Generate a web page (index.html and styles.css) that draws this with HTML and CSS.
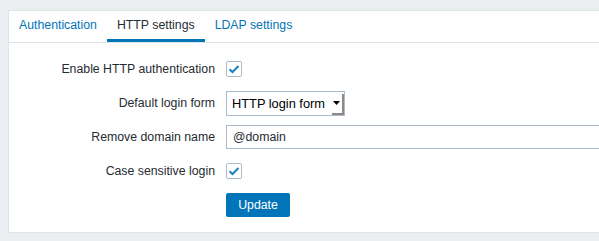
FILE: index.html
```html
<!DOCTYPE html>
<html>
<head>
<meta charset="utf-8">
<link rel="stylesheet" href="styles.css">
</head>
<body>
<div class="panel">
  <div class="tabs">
    <a class="tab">Authentication</a>
    <a class="tab active">HTTP settings</a>
    <a class="tab">LDAP settings</a>
  </div>
  <div class="form">
    <div class="row">
      <div class="label">Enable HTTP authentication</div>
      <div class="field"><span class="check"><svg width="12" height="10" viewBox="0 0 12 10"><path d="M1.5 5.2 L4.5 8 L10.5 2" fill="none" stroke="#1a80c4" stroke-width="2"/></svg></span></div>
    </div>
    <div class="row">
      <div class="label">Default login form</div>
      <div class="field">
        <div class="select"><span class="select-text">HTTP login form</span><span class="arrow"><svg width="7" height="4" viewBox="0 0 7 4"><path d="M0 0 H7 L3.5 4 Z" fill="#000"/></svg></span></div>
      </div>
    </div>
    <div class="row">
      <div class="label">Remove domain name</div>
      <div class="field"><div class="input">@domain</div></div>
    </div>
    <div class="row">
      <div class="label">Case sensitive login</div>
      <div class="field"><span class="check"><svg width="12" height="10" viewBox="0 0 12 10"><path d="M1.5 5.2 L4.5 8 L10.5 2" fill="none" stroke="#1a80c4" stroke-width="2"/></svg></span></div>
    </div>
    <div class="row">
      <div class="label"></div>
      <div class="field"><button class="btn">Update</button></div>
    </div>
  </div>
</div>
</body>
</html>
```
FILE: styles.css
```css
html, body {
  margin: 0;
  padding: 0;
  overflow: hidden;
}
body {
  background: #ebeef0;
  font-family: "Liberation Sans", Arial, sans-serif;
  font-size: 12.3px;
  color: #1f2c33;
  width: 599px;
  height: 241px;
}
.panel {
  margin: 10px 0 0 8px;
  width: 591px;
  height: 223px;
  box-sizing: border-box;
  background: #ffffff;
  border: 1px solid #dfe4e7;
  border-right: none;
  overflow: hidden;
}
.tabs {
  display: flex;
  height: 31px;
  border-bottom: 1px solid #dfe4e7;
}
.tab {
  display: block;
  padding: 7px 10px 0;
  line-height: 14px;
  color: #0275b8;
  box-sizing: border-box;
  height: 31px;
  border-bottom: 3px solid transparent;
}
.active {
  color: #1f2c33;
  border-bottom-color: #0275b8;
}
.form {
  padding-top: 14px;
}
.row {
  display: flex;
  align-items: center;
  height: 24px;
  margin-bottom: 10px;
}
.label {
  width: 206px;
  text-align: right;
  padding-right: 11px;
  flex: none;
}
.field {
  display: flex;
  align-items: center;
}
.check {
  display: flex;
  align-items: center;
  justify-content: center;
  width: 16px;
  height: 16px;
  box-sizing: border-box;
  border: 1px solid #acbbc7;
  border-radius: 2px;
  background: #fff;
}
.select {
  display: flex;
  align-items: stretch;
  width: 119px;
  height: 25px;
  box-sizing: border-box;
  border: 1px solid #acbbc7;
  background: #fff;
}
.select-text {
  flex: 1;
  padding-left: 5px;
  line-height: 23px;
  font-size: 12.8px;
  color: #000;
}
.arrow {
  width: 12px;
  box-sizing: border-box;
  margin: 2px 0 0 0;
  border-right: 2px solid #8a8a8a;
  border-bottom: 2px solid #8a8a8a;
  display: flex;
  align-items: center;
  justify-content: center;
  padding-right: 2px;
}
.input {
  width: 390px;
  height: 24px;
  box-sizing: border-box;
  border: 1px solid #acbbc7;
  padding-left: 6px;
  line-height: 22px;
  color: #1f2c33;
  flex: none;
}
.btn {
  width: 64px;
  height: 24px;
  background: #0275b8;
  color: #fff;
  border: none;
  border-radius: 2px;
  font-family: "Liberation Sans", Arial, sans-serif;
  font-size: 12.3px;
  padding: 0;
}
```
